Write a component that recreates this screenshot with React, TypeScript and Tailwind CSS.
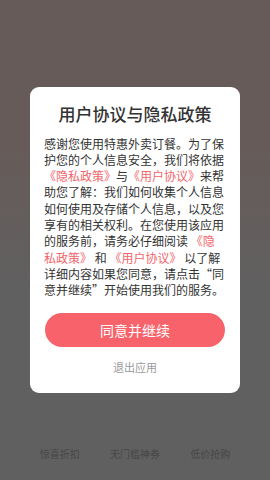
import React from 'react';

const tabs = ['惊喜折扣', '无门槛神券', '低价抢购'];

const App = () => {
    return (
        <div
            className="relative w-[270px] h-[480px] overflow-hidden flex flex-col bg-[linear-gradient(180deg,#675b59_0%,#665b59_30%,#606060_62%,#606060_100%)]"
            style={{ fontFamily: '"Noto Sans CJK SC", "Noto Sans", sans-serif' }}
        >
            <div className="mt-auto mb-[19px] grid grid-cols-3 px-[22px] text-[10px] leading-[14px] text-[#474747] text-center">
                {tabs.map((t) => (
                    <span key={t}>{t}</span>
                ))}
            </div>

            {/* privacy dialog */}
            <div className="absolute inset-0 flex items-center justify-center">
                <div className="w-[210px] bg-white rounded-[9px] px-[14px] pt-[15px] pb-[18px] flex flex-col items-center">
                    <h1 className="text-[17px] leading-[24px] font-medium text-[#333]">用户协议与隐私政策</h1>
                    <p className="mt-[10px] w-[182px] text-[12px] leading-[16.3px] text-[#333]">
                        感谢您使用特惠外卖订餐。为了保护您的个人信息安全，我们将依据
                        <span className="text-[#f2656b]">《隐私政策》</span>与
                        <span className="text-[#f2656b]">《用户协议》</span>来帮助您了解：我们如何收集个人信息如何使用及存储个人信息，以及您享有的相关权利。在您使用该应用的服务前，请务必仔细阅读{' '}
                        <span className="text-[#f2656b]">《隐私政策》</span> 和{' '}
                        <span className="text-[#f2656b]">《用户协议》</span> 以了解详细内容如果您同意，请点击“同意并继续”开始使用我们的服务。
                    </p>
                    <button className="mt-[15px] w-[180px] h-[34px] rounded-full bg-[#f8626a] text-white text-[14px]">
                        同意并继续
                    </button>
                    <button className="mt-[12px] text-[11px] leading-[16px] text-[#9a9a9a]">退出应用</button>
                </div>
            </div>
        </div>
    );
};

export default App;
